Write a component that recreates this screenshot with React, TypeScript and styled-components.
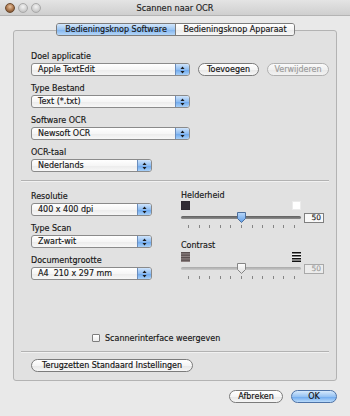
import styled, { createGlobalStyle } from "styled-components";

const GlobalStyle = createGlobalStyle`
  body {
    margin: 0;
    font-family: "DejaVu Sans", "Liberation Sans", sans-serif;
    font-size: 8px;
    color: #151515;
    -webkit-text-stroke: 0.15px currentColor;
  }
`;

const Window = styled.div`
  width: 350px;
  height: 416px;
  background: #e9e9e9;
  display: flex;
  flex-direction: column;
  overflow: hidden;
`;

const TitleBar = styled.div`
  height: 16px;
  display: grid;
  grid-template-columns: 1fr auto 1fr;
  align-items: center;
  background: linear-gradient(#e4e4e4, #cfcfcf);
  border-bottom: 1px solid #b4b4b4;
  box-sizing: border-box;
`;

const Lights = styled.div`
  display: flex;
  gap: 3px;
  padding-left: 5px;
`;

const Light = styled.span<{ $close?: boolean }>`
  width: 10px;
  height: 10px;
  border-radius: 50%;
  box-sizing: border-box;
  border: 1px solid ${(p) => (p.$close ? "#6b4a2e" : "#a9a9a9")};
  background: ${(p) =>
    p.$close
      ? "radial-gradient(circle at 50% 35%, #e8c3a0, #a9744a 55%, #5e3f27)"
      : "radial-gradient(circle at 50% 35%, #f3f3f3, #cfcfcf 60%, #b5b5b5)"};
`;

const Title = styled.div`
  font-size: 8.2px;
  color: #222;
`;

const Body = styled.div`
  padding: 7px 13px 0;
  display: flex;
  flex-direction: column;
`;

const Tabs = styled.div`
  align-self: center;
  display: flex;
  height: 13px;
  position: relative;
  z-index: 1;
  margin-left: 1px;
  border: 1px solid #7c7c7c;
  border-radius: 3px;
  box-sizing: border-box;
  overflow: hidden;
`;

const Tab = styled.div<{ $active?: boolean }>`
  width: 118px;
  display: flex;
  align-items: center;
  justify-content: center;
  line-height: 11px;
  background: ${(p) =>
    p.$active
      ? "linear-gradient(#d2e6fb, #9cc6f3 50%, #7fb2ee 51%, #b4d6f8)"
      : "linear-gradient(#ffffff, #f4f4f4 50%, #e9e9e9 51%, #f7f7f7)"};
  & + & {
    border-left: 1px solid #7c7c7c;
  }
`;

const Group = styled.div`
  margin-top: -6px;
  height: 351px;
  box-sizing: border-box;
  border: 1px solid #b3b3b3;
  border-radius: 3px;
  background: #e1e1e1;
  padding: 19px 7px 0;
  display: flex;
  flex-direction: column;
`;

const Section = styled.div`
  padding-left: 10px;
  display: flex;
  flex-direction: column;
  gap: 6px;
`;

const Field = styled.div`
  display: flex;
  flex-direction: column;
`;

const Label = styled.div<{ $h?: number; $top?: number }>`
  height: ${(p) => p.$h ?? 13}px;
  line-height: ${(p) => p.$h ?? 13}px;
  margin-top: ${(p) => p.$top ?? 0}px;
  white-space: nowrap;
`;

const Row = styled.div<{ $gap?: number }>`
  display: flex;
  align-items: center;
  gap: ${(p) => p.$gap ?? 8}px;
`;

const SelectBox = styled.div<{ $w: number }>`
  width: ${(p) => p.$w}px;
  height: 13px;
  box-sizing: border-box;
  display: flex;
  border: 1px solid #8a8a8a;
  border-radius: 3px;
  overflow: hidden;
  background: linear-gradient(#ffffff, #f6f6f6 50%, #ebebeb 51%, #f7f7f7);
`;

const SelectText = styled.span`
  flex: 1;
  padding-left: 6px;
  line-height: 11px;
  white-space: pre;
`;

const SelectCap = styled.span`
  width: 13px;
  border-left: 1px solid #6a8dbd;
  display: flex;
  align-items: center;
  justify-content: center;
  background: linear-gradient(#cfe4fb, #8fbdf2 50%, #69a5ec 51%, #a8d0f8);
`;

const PushButton = styled.div<{ $w: number; $disabled?: boolean; $default?: boolean }>`
  width: ${(p) => p.$w}px;
  height: 13px;
  box-sizing: border-box;
  border-radius: 7px;
  display: flex;
  align-items: center;
  justify-content: center;
  line-height: 11px;
  white-space: nowrap;
  color: ${(p) => (p.$disabled ? "#9a9a9a" : "#111")};
  border: 1px solid
    ${(p) => (p.$disabled ? "#b0b0b0" : p.$default ? "#4d72a6" : "#7b7b7b")};
  background: ${(p) =>
    p.$default
      ? "linear-gradient(#d6e9fc, #97c3f3 50%, #6aa7ee 51%, #b8dafa)"
      : p.$disabled
      ? "linear-gradient(#fafafa, #f0f0f0 50%, #e8e8e8 51%, #f2f2f2)"
      : "linear-gradient(#ffffff, #f5f5f5 50%, #e7e7e7 51%, #f6f6f6)"};
`;

const Separator = styled.div<{ $top: number }>`
  margin-top: ${(p) => p.$top}px;
  height: 1px;
  background: #b2b2b2;
  border-bottom: 1px solid #f1f1f1;
`;

const Columns = styled.div`
  margin-top: 8px;
  padding-left: 10px;
  display: flex;
  gap: 29px;
`;

const LeftCol = styled.div`
  display: flex;
  flex-direction: column;
  gap: 6px;
`;

const RightCol = styled.div`
  width: 143px;
  display: flex;
  flex-direction: column;
`;

const IconRow = styled.div<{ $top?: number }>`
  width: 120px;
  margin-top: ${(p) => p.$top ?? 0}px;
  display: flex;
  justify-content: space-between;
`;

const Swatch = styled.span<{ $color: string }>`
  width: 9px;
  height: 9px;
  background: ${(p) => p.$color};
  box-shadow: inset 0 0 0 1px rgba(0, 0, 0, 0.08);
`;

const SliderRow = styled.div<{ $top: number }>`
  margin-top: ${(p) => p.$top}px;
  height: 11px;
  display: flex;
  align-items: center;
  gap: 3px;
`;

const Track = styled.div<{ $light?: boolean }>`
  position: relative;
  width: 120px;
  height: 3px;
  border-radius: 2px;
  background: ${(p) =>
    p.$light
      ? "linear-gradient(#a9a9a9, #c9c9c9)"
      : "linear-gradient(#5e5e5e, #8d8d8d)"};
`;

const Thumb = styled.svg`
  position: absolute;
  left: 55px;
  top: -4px;
`;

const ValueBox = styled.div<{ $disabled?: boolean }>`
  width: 20px;
  height: 10px;
  box-sizing: border-box;
  border: 1px solid ${(p) => (p.$disabled ? "#a9a9a9" : "#7f7f7f")};
  background: ${(p) => (p.$disabled ? "#ececec" : "#f8f8f8")};
  color: ${(p) => (p.$disabled ? "#9c9c9c" : "#222")};
  font-size: 7.5px;
  line-height: 8px;
  text-align: right;
  padding-right: 2px;
`;

const Ticks = styled.div`
  width: 120px;
  margin-top: 2px;
  height: 3px;
  box-sizing: border-box;
  padding: 0 6px 0 7px;
  display: flex;
  justify-content: space-between;
`;

const Tick = styled.span`
  width: 1px;
  height: 3px;
  background: #858585;
`;

const CheckRow = styled.div`
  margin-top: 52px;
  height: 12px;
  padding-left: 71px;
  display: flex;
  align-items: center;
  gap: 5px;
`;

const CheckBox = styled.span`
  width: 8px;
  height: 8px;
  box-sizing: border-box;
  border: 1px solid #7d7d7d;
  border-radius: 1px;
  background: linear-gradient(#ffffff, #ececec);
`;

const ResetRow = styled.div`
  margin-top: 6px;
  padding-left: 10px;
`;

const Footer = styled.div`
  margin-top: 9px;
  display: flex;
  justify-content: flex-end;
  gap: 8px;
`;

function Arrows() {
  return (
    <svg width="5" height="8" viewBox="0 0 5 8">
      <path d="M2.5 0.5 L4.5 3 H0.5 Z" fill="#1a1a1a" />
      <path d="M2.5 7.5 L4.5 5 H0.5 Z" fill="#1a1a1a" />
    </svg>
  );
}

function Select({ w, text }: { w: number; text: string }) {
  return (
    <SelectBox $w={w}>
      <SelectText>{text}</SelectText>
      <SelectCap>
        <Arrows />
      </SelectCap>
    </SelectBox>
  );
}

function Slider({ light }: { light?: boolean }) {
  const id = light ? "thumb-white" : "thumb-blue";
  return (
    <Track $light={light}>
      <Thumb width="11" height="11" viewBox="0 0 11 11">
        <defs>
          <linearGradient id={id} x1="0" y1="0" x2="0" y2="1">
            <stop offset="0" stopColor={light ? "#ffffff" : "#b9d8fa"} />
            <stop offset="1" stopColor={light ? "#dcdcdc" : "#5f9de6"} />
          </linearGradient>
        </defs>
        <path
          d="M1.5 0.5 H9.5 V6.5 L5.5 10.5 L1.5 6.5 Z"
          fill={`url(#${id})`}
          stroke={light ? "#858585" : "#4d6f9c"}
          strokeWidth="1"
        />
      </Thumb>
    </Track>
  );
}

function TickMarks() {
  return (
    <Ticks>
      {Array.from({ length: 11 }).map((_, i) => (
        <Tick key={i} />
      ))}
    </Ticks>
  );
}

function Stripes({ high }: { high?: boolean }) {
  return (
    <svg width="9" height="10" viewBox="0 0 9 10">
      {high ? (
        <>
          <rect width="9" height="10" fill="#f4f4f4" />
          {[0, 3, 6, 8.5].map((y) => (
            <rect key={y} y={y} width="9" height="1.5" fill="#111" />
          ))}
        </>
      ) : (
        <>
          <rect width="9" height="10" fill="#8c8080" />
          {[0, 2.5, 5, 7.5].map((y) => (
            <rect key={y} y={y} width="9" height="1.3" fill="#5a4f4f" />
          ))}
        </>
      )}
    </svg>
  );
}

export default function App() {
  return (
    <>
      <GlobalStyle />
      <Window>
        <TitleBar>
          <Lights>
            <Light $close />
            <Light />
            <Light />
          </Lights>
          <Title>Scannen naar OCR</Title>
          <span />
        </TitleBar>
        <Body>
          <Tabs>
            <Tab $active>Bedieningsknop Software</Tab>
            <Tab>Bedieningsknop Apparaat</Tab>
          </Tabs>
          <Group>
            <Section>
              <Field>
                <Label>Doel applicatie</Label>
                <Row>
                  <Select w={159} text="Apple TextEdit" />
                  <PushButton $w={61}>Toevoegen</PushButton>
                  <PushButton $w={62} $disabled>
                    Verwijderen
                  </PushButton>
                </Row>
              </Field>
              <Field>
                <Label>Type Bestand</Label>
                <Select w={159} text="Text (*.txt)" />
              </Field>
              <Field>
                <Label>Software OCR</Label>
                <Select w={159} text="Newsoft OCR" />
              </Field>
              <Field>
                <Label>OCR-taal</Label>
                <Select w={121} text="Nederlands" />
              </Field>
            </Section>

            <Separator $top={8} />

            <Columns>
              <LeftCol>
                <Field>
                  <Label>Resolutie</Label>
                  <Select w={121} text="400 x 400 dpi" />
                </Field>
                <Field>
                  <Label>Type Scan</Label>
                  <Select w={121} text="Zwart-wit" />
                </Field>
                <Field>
                  <Label>Documentgrootte</Label>
                  <Select w={121} text="A4  210 x 297 mm" />
                </Field>
              </LeftCol>
              <RightCol>
                <Label $h={11}>Helderheid</Label>
                <IconRow>
                  <Swatch $color="#2f2a33" />
                  <Swatch $color="#ffffff" />
                </IconRow>
                <SliderRow $top={2}>
                  <Slider />
                  <ValueBox>50</ValueBox>
                </SliderRow>
                <TickMarks />
                <Label $h={11} $top={12}>
                  Contrast
                </Label>
                <IconRow $top={1}>
                  <Stripes />
                  <Stripes high />
                </IconRow>
                <SliderRow $top={1}>
                  <Slider light />
                  <ValueBox $disabled>50</ValueBox>
                </SliderRow>
                <TickMarks />
              </RightCol>
            </Columns>

            <CheckRow>
              <CheckBox />
              <span>Scannerinterface weergeven</span>
            </CheckRow>

            <Separator $top={7} />

            <ResetRow>
              <PushButton $w={162}>Terugzetten Standaard Instellingen</PushButton>
            </ResetRow>
          </Group>
          <Footer>
            <PushButton $w={54}>Afbreken</PushButton>
            <PushButton $w={46} $default>
              OK
            </PushButton>
          </Footer>
        </Body>
      </Window>
    </>
  );
}
